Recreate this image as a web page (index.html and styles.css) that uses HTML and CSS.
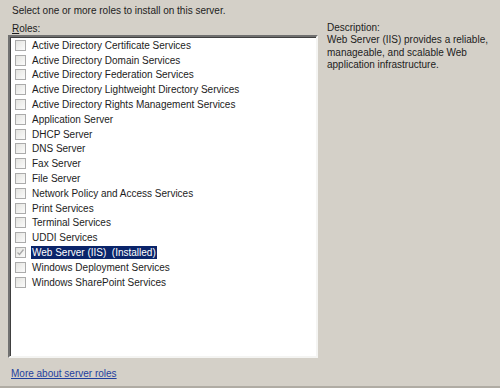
FILE: index.html
```html
<!DOCTYPE html>
<html lang="en">
<head>
    <meta charset="UTF-8">
    <title>Select Server Roles</title>
    <link rel="stylesheet" href="styles.css">
</head>
<body>
    <div class="wizard-page">
        <p class="intro">Select one or more roles to install on this server.</p>
        <div class="roles-layout">
            <div class="roles-column">
                <div class="roles-label"><u>R</u>oles:</div>
                <ul class="role-list">
                    <li class="role"><span class="check"></span><span class="role-name">Active Directory Certificate Services</span></li>
                    <li class="role"><span class="check"></span><span class="role-name">Active Directory Domain Services</span></li>
                    <li class="role"><span class="check"></span><span class="role-name">Active Directory Federation Services</span></li>
                    <li class="role"><span class="check"></span><span class="role-name">Active Directory Lightweight Directory Services</span></li>
                    <li class="role"><span class="check"></span><span class="role-name">Active Directory Rights Management Services</span></li>
                    <li class="role"><span class="check"></span><span class="role-name">Application Server</span></li>
                    <li class="role"><span class="check"></span><span class="role-name">DHCP Server</span></li>
                    <li class="role"><span class="check"></span><span class="role-name">DNS Server</span></li>
                    <li class="role"><span class="check"></span><span class="role-name">Fax Server</span></li>
                    <li class="role"><span class="check"></span><span class="role-name">File Server</span></li>
                    <li class="role"><span class="check"></span><span class="role-name">Network Policy and Access Services</span></li>
                    <li class="role"><span class="check"></span><span class="role-name">Print Services</span></li>
                    <li class="role"><span class="check"></span><span class="role-name">Terminal Services</span></li>
                    <li class="role"><span class="check"></span><span class="role-name">UDDI Services</span></li>
                    <li class="role selected">
                        <span class="check checked">
                            <svg width="9" height="9" viewBox="0 0 9 9"><path d="M1.5 4.5 L3.5 6.5 L7.5 1.5" fill="none" stroke="#a8a8a8" stroke-width="1.3"/></svg>
                        </span><span class="role-name">Web Server (IIS)&nbsp; (Installed)</span>
                    </li>
                    <li class="role"><span class="check"></span><span class="role-name">Windows Deployment Services</span></li>
                    <li class="role"><span class="check"></span><span class="role-name">Windows SharePoint Services</span></li>
                </ul>
            </div>
            <div class="description">
                <div>Description:</div>
                <div>Web Server (IIS) provides a reliable, manageable, and scalable Web application infrastructure.</div>
            </div>
        </div>
        <a class="more-link" href="#">More about server roles</a>
    </div>
</body>
</html>
```

FILE: styles.css
```css
:root {
    --dialog-bg: #d4d0c8; --text: #1c1c1c; --select-bg: #0a246a;
    --link: #1f3f9e; --check-border: #ababab;
}
body { margin: 0; background-color: var(--dialog-bg); font-family: 'Liberation Sans', Arial, sans-serif; font-size: 10px; color: var(--text); }
.wizard-page { height: 388px; border-bottom: 2px solid #b0aca4; padding: 4px 0 0; box-sizing: border-box; }
.intro { margin: 0 0 0 12px; line-height: 13px; }
.roles-layout { display: flex; gap: 9px; margin-top: 5px; }
.roles-column { width: 310px; margin-left: 8px; }
.roles-label { margin-left: 4px; line-height: 13px; }
.role-list { list-style: none; margin: 0; padding: 1px 0 0; height: 323px; background: #fff; box-sizing: border-box; border: 2px solid; border-color: #707070 #f4f4f2 #f4f4f2 #707070; box-shadow: inset 1px 1px 0 #404040; }
.role { display: flex; align-items: center; height: 14.8px; padding-left: 5px; }
.check { width: 9px; height: 9px; border: 1px solid var(--check-border); background: linear-gradient(135deg, #e4e4e0, #fbfbfb); flex: none; display: flex; align-items: center; justify-content: center; }
.role-name { margin-left: 5px; padding: 0 1px; line-height: 13px; white-space: nowrap; }
.role.selected .role-name { background: var(--select-bg); color: #fff; }
.description { line-height: 12.4px; width: 170px; }
.more-link { display: inline-block; margin: 10px 0 0 11px; color: var(--link); text-decoration: underline; }
```
